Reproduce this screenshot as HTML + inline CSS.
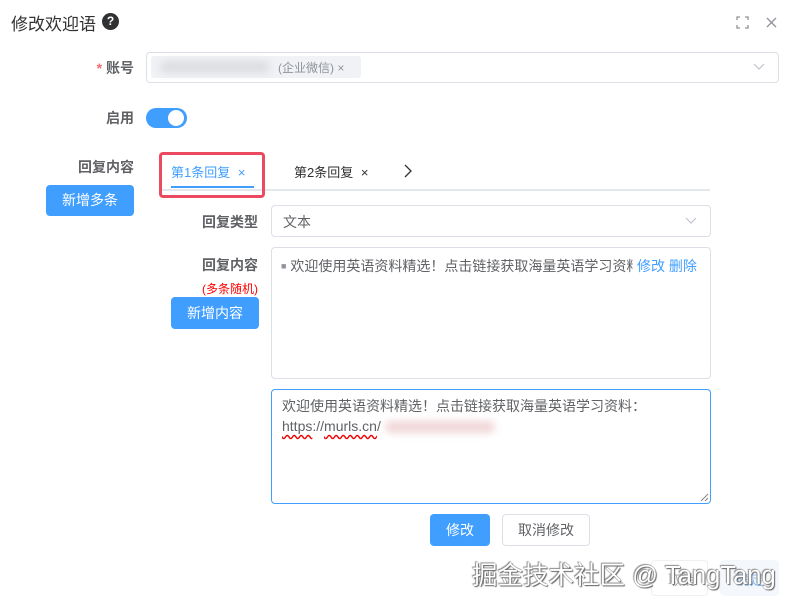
<!DOCTYPE html>
<html><head><meta charset="utf-8"><style>
*{box-sizing:border-box;margin:0;padding:0}
body{width:793px;height:605px;background:#fff;font-family:"Liberation Sans","Noto Sans CJK SC",sans-serif;font-size:14px;color:#606266;position:relative;overflow:hidden}
.a{position:absolute;white-space:nowrap}
.lbl{font-weight:bold;color:#606266;text-align:right}
.box{position:absolute;border:1px solid #dcdfe6;border-radius:4px;background:#fff}
.btn{position:absolute;background:#409eff;color:#fff;border-radius:4px;text-align:center;font-size:14px}
</style></head><body>
<div class="a" style="left:11px;top:10px;font-size:17px;color:#303133">修改欢迎语</div>
<div class="a" style="left:102px;top:13px;width:17px;height:17px;border-radius:50%;background:#303133;color:#fff;font-size:12px;font-weight:bold;text-align:center;line-height:17px">?</div>
<svg class="a" style="left:736px;top:16px" width="13" height="13" viewBox="0 0 13 13" fill="none" stroke="#909399" stroke-width="1.3"><path d="M1 4V1h3M9 1h3v3M12 9v3H9M4 12H1V9"/></svg>
<svg class="a" style="left:766px;top:17px" width="11" height="11" viewBox="0 0 11 11" stroke="#909399" stroke-width="1.3"><path d="M1 1l9 9M10 1l-9 9"/></svg>

<div class="a lbl" style="left:60px;width:74px;top:58px"><span style="color:#f56c6c">*</span> 账号</div>
<div class="box" style="left:146px;top:52px;width:633px;height:31px"></div>
<div class="a" style="left:151px;top:56px;width:210px;height:22px;background:#f0f2f5;border-radius:3px"></div>
<div class="a" style="left:160px;top:61px;width:110px;height:12px;background:#dcdde0;filter:blur(4px);border-radius:6px"></div>
<div class="a" style="left:278px;top:59px;font-size:12px;color:#909399">(企业微信) ×</div>
<svg class="a" style="left:753px;top:63px" width="12" height="8" viewBox="0 0 12 8" fill="none" stroke="#c0c4cc" stroke-width="1.2"><path d="M1 1l5 5 5-5"/></svg>

<div class="a lbl" style="left:60px;width:74px;top:108px">启用</div>
<div class="a" style="left:146px;top:108px;width:41px;height:20px;border-radius:10px;background:#409eff"></div>
<div class="a" style="left:168px;top:110px;width:16px;height:16px;border-radius:50%;background:#fff"></div>

<div class="a lbl" style="left:60px;width:74px;top:157px">回复内容</div>
<div class="btn" style="left:46px;top:185px;width:88px;height:31px;line-height:31px">新增多条</div>

<div class="a" style="left:160px;top:189px;width:550px;height:2px;background:#e4e7ed"></div>
<div class="a" style="left:171px;top:162px;color:#409eff;font-size:13px">第1条回复 <span style="color:#409eff;margin-left:4px">×</span></div>
<div class="a" style="left:171px;top:186px;width:83px;height:2px;background:#409eff"></div>
<div class="a" style="left:159px;top:152px;width:106px;height:46px;border:3px solid #ec4a60;border-radius:4px"></div>
<div class="a" style="left:294px;top:162px;color:#303133;font-size:13px">第2条回复 <span style="margin-left:4px">×</span></div>
<svg class="a" style="left:404px;top:164px" width="9" height="14" viewBox="0 0 9 14" fill="none" stroke="#303133" stroke-width="1.3"><path d="M1 1l6 6-6 6"/></svg>

<div class="a lbl" style="left:180px;width:78px;top:212px">回复类型</div>
<div class="box" style="left:271px;top:205px;width:440px;height:32px"></div>
<div class="a" style="left:283px;top:212px;color:#606266">文本</div>
<svg class="a" style="left:685px;top:217px" width="12" height="8" viewBox="0 0 12 8" fill="none" stroke="#c0c4cc" stroke-width="1.2"><path d="M1 1l5 5 5-5"/></svg>

<div class="a lbl" style="left:180px;width:78px;top:255px">回复内容</div>
<div class="a" style="left:180px;width:78px;top:280px;font-size:12px;color:#f00;text-align:right">(多条随机)</div>
<div class="btn" style="left:171px;top:297px;width:88px;height:32px;line-height:32px">新增内容</div>
<div class="box" style="left:271px;top:247px;width:440px;height:132px"></div>
<div class="a" style="left:281px;top:256px;width:352px;overflow:hidden;color:#606266"><span style="color:#909399;font-size:9px;vertical-align:2px">■</span> 欢迎使用英语资料精选！点击链接获取海量英语学习资料：</div>
<div class="a" style="left:637px;top:256px;color:#409eff">修改&nbsp;删除</div>

<div class="box" style="left:271px;top:389px;width:440px;height:115px;border-color:#409eff"></div>
<div class="a" style="left:282px;top:396px;color:#606266">欢迎使用英语资料精选！点击链接获取海量英语学习资料：</div>
<div class="a" style="left:282px;top:418px;color:#606266"><span style="text-decoration:underline wavy #e00;text-underline-offset:3px">https</span>://<span style="text-decoration:underline wavy #e00;text-underline-offset:3px">murls.cn</span>/</div>
<div class="a" style="left:385px;top:421px;width:110px;height:12px;background:#f0d6d8;filter:blur(4px);border-radius:6px"></div>
<svg class="a" style="left:700px;top:493px" width="9" height="9" viewBox="0 0 9 9" stroke="#888" stroke-width="1"><path d="M8 1L1 8M8 5L5 8"/></svg>

<div class="btn" style="left:430px;top:514px;width:60px;height:32px;line-height:32px">修改</div>
<div class="box" style="left:502px;top:514px;width:88px;height:32px;line-height:30px;text-align:center;color:#606266">取消修改</div>

<div class="box" style="left:651px;top:560px;width:57px;height:36px;border-color:#f0f0f0"></div>
<div class="a" style="left:668px;top:570px;color:#aaa">取消</div>
<div class="a" style="left:720px;top:560px;width:59px;height:36px;background:#f4f8fd;border-radius:4px"></div>
<div class="a" style="left:736px;top:570px;color:#8fc2f5">确定</div>
<div class="a" style="left:472px;top:555px;font-size:25.5px;color:#fff;text-shadow:0 0 1px #555,1px 1px 1px #666,-1px -1px 1px #999">掘金技术社区 @ TangTang</div>
</body></html>
